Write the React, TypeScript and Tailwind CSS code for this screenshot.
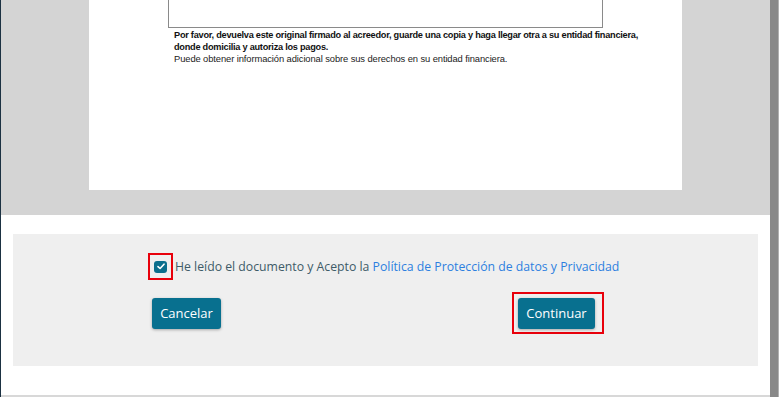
import React from "react";

export default function App() {
  return (
    <div className="w-[779px] h-[397px] flex overflow-hidden bg-white">
      <div className="w-[1px] bg-[#1b3142] shrink-0" />
      <div className="w-[769px] flex flex-col shrink-0">
        <div className="h-[215px] bg-[#d4d4d4] pl-[88px] shrink-0">
          <div className="w-[593px] h-[190px] bg-white pt-0">
            <div className="ml-[79px] w-[435px] h-[28px] border-l border-r border-b border-[#8a8a8a]" />
            <div
              className="ml-[85px] mt-[2px] text-[9.2px] leading-[11.5px] tracking-[-0.25px] text-[#111] whitespace-nowrap"
              style={{ fontFamily: '"Liberation Sans", Arial, sans-serif' }}
            >
              <p className="font-bold">
                Por favor, devuelva este original firmado al acreedor, guarde una copia y haga llegar otra a su entidad financiera,
              </p>
              <p className="font-bold">donde domicilia y autoriza los pagos.</p>
              <p className="text-[#222] text-[9.4px] tracking-[-0.1px]">Puede obtener información adicional sobre sus derechos en su entidad financiera.</p>
            </div>
          </div>
        </div>
        <div className="flex-1 bg-white">
          <div className="ml-[12px] mt-[19px] w-[745px] h-[132px] bg-[#efefef]" style={{ fontFamily: '"Open Sans", "Noto Sans", sans-serif' }}>
            <div className="pt-[19px] pl-[135px] flex items-center">
              <div className="w-[25px] h-[27px] border-2 border-[#e8000b] flex items-center justify-center">
                <div className="w-[13px] h-[12px] rounded-[3px] bg-[#0b6e8c] flex items-center justify-center">
                  <svg width="8" height="7" viewBox="0 0 8 7">
                    <path d="M1 3.6 L3.1 5.5 L7 1.2" stroke="white" strokeWidth="1.6" fill="none" strokeLinecap="round" strokeLinejoin="round" />
                  </svg>
                </div>
              </div>
              <span className="ml-[2px] mt-[2px] text-[12.25px] text-[#3e5b68] whitespace-nowrap">
                He leído el documento y Acepto la{" "}
                <span className="text-[#2d7fe0]">Política de Protección de datos y Privacidad</span>
              </span>
            </div>
            <div className="mt-[12px] ml-[139px] w-[452px] flex items-start justify-between">
              <button className="mt-[6px] w-[69px] h-[31px] rounded-[3px] bg-[#08708f] text-white text-[13px] shadow-[0_1px_3px_rgba(0,0,0,0.3)]">
                Cancelar
              </button>
              <div className="border-2 border-[#e8000b] pl-[4px] pr-[7px] pt-[4px] pb-[3px]">
                <button className="w-[77px] h-[31px] rounded-[3px] bg-[#08708f] text-white text-[13px] shadow-[0_1px_3px_rgba(0,0,0,0.3)]">
                  Continuar
                </button>
              </div>
            </div>
          </div>
        </div>
        <div className="h-[2px] bg-[#d8d8d8] shrink-0" />
      </div>
      <div className="w-[8px] bg-[#888888] shrink-0" />
      <div className="w-[1px] bg-[#b0b0b0] shrink-0" />
    </div>
  );
}
